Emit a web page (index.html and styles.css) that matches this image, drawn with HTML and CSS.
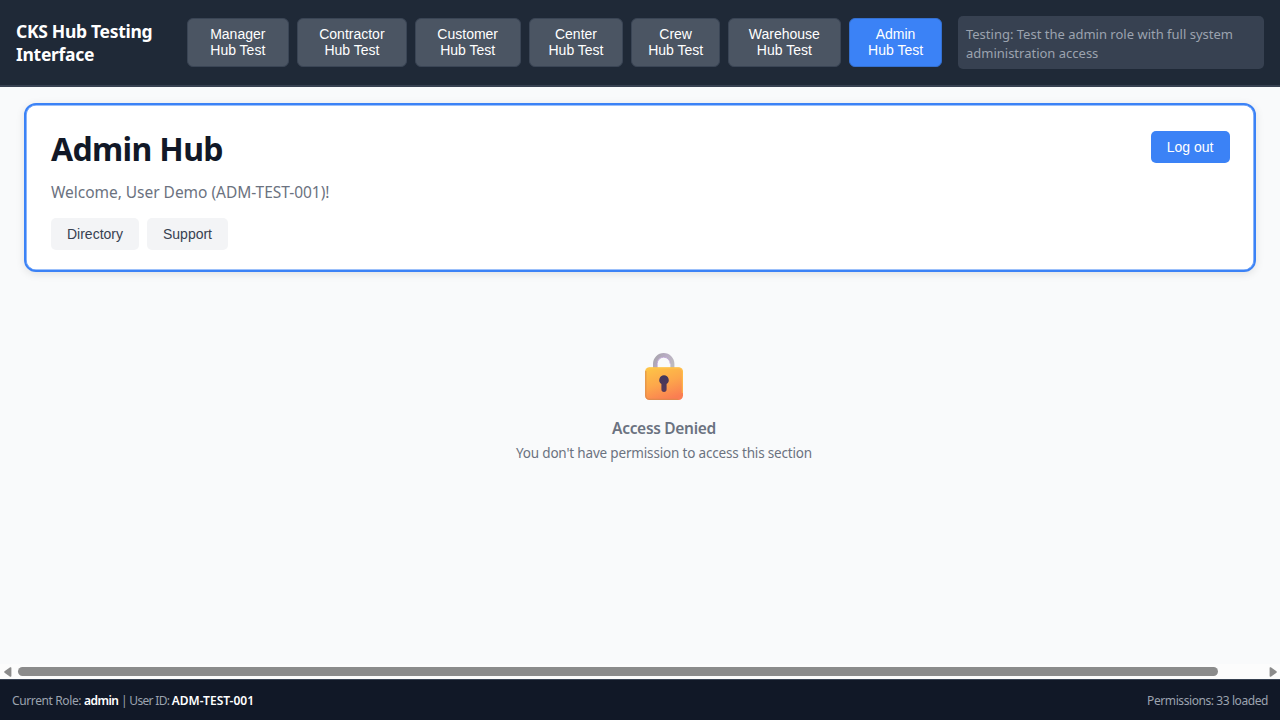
FILE: index.html
```html
<!DOCTYPE html>
<html lang="en">
<head>
<meta charset="utf-8">
<title>CKS Hub Testing Interface</title>
<link rel="stylesheet" href="styles.css">
</head>
<body>
<header class="topbar">
  <h1 class="brand">CKS Hub Testing<br>Interface</h1>
  <nav class="roles">
    <button class="role manager">Manager<br>Hub Test</button>
    <button class="role contractor">Contractor<br>Hub Test</button>
    <button class="role customer">Customer<br>Hub Test</button>
    <button class="role center">Center<br>Hub Test</button>
    <button class="role crew">Crew<br>Hub Test</button>
    <button class="role warehouse">Warehouse<br>Hub Test</button>
    <button class="role admin">Admin<br>Hub Test</button>
  </nav>
  <div class="note">Testing: Test the admin role with full system<br>administration access</div>
</header>
<main class="content">
  <section class="card">
    <div>
      <h2 class="title">Admin Hub</h2>
      <p class="welcome">Welcome, User Demo (ADM-TEST-001)!</p>
      <div class="tabs">
        <button class="tab directory">Directory</button>
        <button class="tab support">Support</button>
      </div>
    </div>
    <button class="logout">Log out</button>
  </section>
  <section class="denied">
    <svg class="lock" width="40" height="48" viewBox="0 0 40 48">
      <defs>
        <linearGradient id="body" x1="0.2" y1="0" x2="0.6" y2="1">
          <stop offset="0" stop-color="#fdc347"/>
          <stop offset="0.5" stop-color="#fda74b"/>
          <stop offset="1" stop-color="#fa7d52"/>
        </linearGradient>
        <linearGradient id="shackle" x1="0" y1="0" x2="1" y2="0.6">
          <stop offset="0" stop-color="#a7a3ab"/>
          <stop offset="0.5" stop-color="#b9adc4"/>
          <stop offset="1" stop-color="#bdbabf"/>
        </linearGradient>
        <linearGradient id="hole" x1="0" y1="0" x2="0" y2="1">
          <stop offset="0" stop-color="#3f355d"/>
          <stop offset="1" stop-color="#5a3a55"/>
        </linearGradient>
      </defs>
      <path d="M11 18V10.7a8.7 8.7 0 0 1 17.4 0V18" fill="none" stroke="url(#shackle)" stroke-width="4"/>
      <path d="M13.2 16V10.7a6.5 6.5 0 0 1 13 0" fill="none" stroke="#b79bd0" stroke-width="0.8"/>
      <rect x="1" y="14.3" width="38" height="32.7" rx="4.5" fill="url(#body)"/>
      <path d="M1.8 18V42.5a4 4 0 0 0 4 3.8H34" fill="none" stroke="#d98a4b" stroke-width="1.2" opacity="0.75"/>
      <path d="M5 15H35a3.3 3.3 0 0 1 3.3 3.3V40" fill="none" stroke="#ffc94a" stroke-width="1" opacity="0.7"/>
      <path d="M20 22.2a4.8 4.8 0 0 0-2.6 8.8v5.3a2.6 2.6 0 0 0 5.2 0V31A4.8 4.8 0 0 0 20 22.2z" fill="url(#hole)"/>
    </svg>
    <h3 class="denied-title">Access Denied</h3>
    <p class="denied-text">You don't have permission to access this section</p>
  </section>
</main>
<div class="scrollbar">
  <svg class="arrow" width="8" height="10" viewBox="0 0 8 10"><path d="M6.6 1v8L1 5z" fill="#8b8b8b" stroke="#8b8b8b" stroke-width="1.6" stroke-linejoin="round"/></svg>
  <div class="track"><div class="thumb"></div></div>
  <svg class="arrow" width="8" height="10" viewBox="0 0 8 10"><path d="M1.4 1v8L7 5z" fill="#8b8b8b" stroke="#8b8b8b" stroke-width="1.6" stroke-linejoin="round"/></svg>
</div>
<footer class="status">
  <div class="who">Current Role: <b class="role-name">admin</b><span class="user-label"> | User ID: </span><b>ADM-TEST-001</b></div>
  <div class="perms">Permissions: 33 loaded</div>
</footer>
</body>
</html>
```
FILE: styles.css
```css
* { box-sizing: border-box; }
body {
  margin: 0;
  width: 1280px;
  height: 720px;
  overflow: hidden;
  display: flex;
  flex-direction: column;
  background: #f9fafb;
  font-family: "Noto Sans", "Open Sans", sans-serif;
  white-space: nowrap;
}
h1, h2, h3, p { margin: 0; }
button {
  border: 0;
  padding: 0;
  border-radius: 5px;
  font: 14px/16px "Liberation Sans", Arial, sans-serif;
  text-align: center;
}
.topbar {
  height: 87px;
  flex: none;
  display: flex;
  align-items: center;
  padding: 0 16px;
  background: #1f2937;
  border-bottom: 2px solid #374151;
}
.brand {
  width: 170.5px;
  color: #fff;
  font-size: 17.5px;
  line-height: 23px;
  font-weight: 700;
  letter-spacing: -0.3px;
}
.roles { display: flex; gap: 8px; }
.role {
  height: 49px;
  padding-bottom: 2px;
  border: 1px solid #3a4555;
  border-radius: 6px;
  background: #4b5563;
  color: #fff;
}
.manager { width: 102.6px; }
.contractor { width: 109.6px; }
.customer { width: 106px; }
.center { width: 94.6px; }
.crew { width: 88.7px; }
.warehouse { width: 112.8px; }
.admin { width: 93.6px; background: #3b82f6; border-color: #3470d0; }
.note {
  flex: 1;
  margin-left: 15.6px;
  height: 53px;
  padding: 9px 8px;
  border-radius: 5px;
  background: #374151;
  color: #9ca3af;
  font-size: 13px;
  line-height: 19px;
}
.content { flex: 1; padding: 16.4px 24px 0; }
.card {
  height: 169px;
  display: flex;
  justify-content: space-between;
  align-items: flex-start;
  padding: 24px 24.5px 0 25px;
  background: #fff;
  border: 2px solid #3b82f6;
  border-radius: 12px;
  box-shadow: inset 0 0 0 0.6px #3b82f6, 0 2px 8px rgba(0, 0, 0, 0.1);
}
.title {
  color: #111827;
  font-size: 32px;
  line-height: 40px;
  font-weight: 700;
  letter-spacing: -0.65px;
}
.welcome {
  margin-top: 12px;
  color: #6b7280;
  font-size: 15.5px;
  line-height: 22px;
  letter-spacing: -0.03px;
}
.tabs { display: flex; gap: 8px; margin-top: 15px; }
.tab { height: 32px; background: #f3f4f6; color: #374151; }
.directory { width: 88px; }
.support { width: 81px; }
.logout { width: 79px; height: 32px; margin-top: 2px; background: #3b82f6; color: #fff; }
.denied {
  display: flex;
  flex-direction: column;
  align-items: center;
  padding: 80.6px 0 0 48px;
  color: #6b7280;
}
.denied-title { margin-top: 16px; font-size: 15.5px; line-height: 22px; font-weight: 600; letter-spacing: -0.3px; }
.denied-text { margin-top: 4px; font-size: 13.5px; line-height: 20px; letter-spacing: -0.17px; }
.scrollbar {
  height: 15px;
  flex: none;
  display: flex;
  align-items: center;
  padding: 0 3.5px;
  background: #fcfcfc;
}
.arrow { flex: none; }
.track { flex: 1; padding-left: 6.5px; }
.thumb { width: 1199.5px; height: 9px; border-radius: 5px; background: #8b8b8b; }
.status {
  height: 41px;
  flex: none;
  display: flex;
  justify-content: space-between;
  align-items: center;
  padding: 1px 12px 0;
  background: #111827;
  border-top: 1px solid #374151;
  color: #9ca3af;
  font-size: 12px;
}
.who { letter-spacing: -0.38px; }
.perms { letter-spacing: -0.42px; }
.user-label { letter-spacing: -0.68px; }
.status b { color: #fff; font-size: 12px; font-weight: 600; letter-spacing: 0; }
.status .role-name { letter-spacing: -0.5px; }
```
